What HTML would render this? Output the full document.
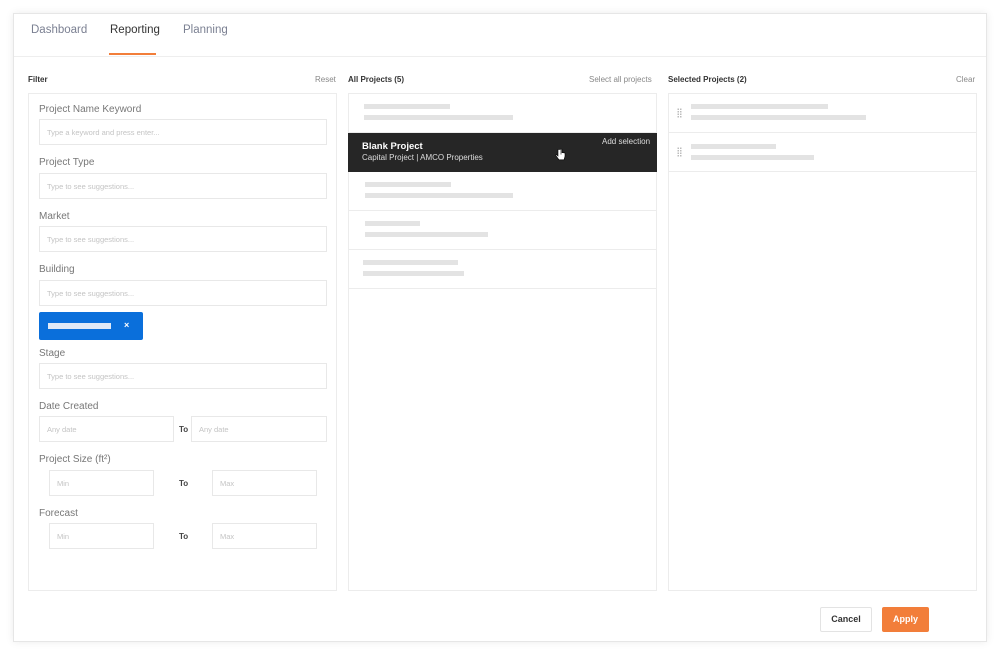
<!DOCTYPE html>
<html><head><meta charset="utf-8"><style>
*{box-sizing:border-box;margin:0;padding:0}
body{width:1000px;height:655px;background:#fff;font-family:"Liberation Sans",sans-serif;position:relative;overflow:hidden}
.a{position:absolute}
.card{left:13px;top:13px;width:974px;height:629px;border:1px solid #e6e6e6;box-shadow:0 0 8px rgba(0,0,0,.08);background:#fff}
.tab{top:24px;font-size:11.5px;color:#7b8092}
.h{font-size:8px;font-weight:bold;color:#333}
.lnk{font-size:8px;color:#888}
.box{border:1px solid #ececec;background:#fff}
.lbl{font-size:10px;color:#777}
.in{border:1px solid #e8e8e8;height:26px;font-size:7.5px;color:#c4c4c4;padding:8px 0 0 7px}
.to{font-size:8px;font-weight:bold;color:#444}
.bar{background:#e3e3e3;height:5px}
.row{border-bottom:1px solid #ececec;height:39px;left:0;width:100%}
.dots{width:5px;height:10px;background-image:radial-gradient(#bbb 0.7px,transparent 0.9px);background-size:2.5px 2.5px}
</style></head><body>
<div class="a card"></div>
<div class="a" style="left:14px;top:56px;width:972px;height:1px;background:#eee"></div>
<div class="a tab" style="left:31px">Dashboard</div>
<div class="a tab" style="left:110px;color:#333">Reporting</div>
<div class="a tab" style="left:183px">Planning</div>
<div class="a" style="left:109px;top:53px;width:47px;height:2px;background:#f27e3a"></div>

<div class="a h" style="left:28px;top:75px">Filter</div>
<div class="a lnk" style="left:315px;top:75px">Reset</div>
<div class="a h" style="left:348px;top:75px">All Projects (5)</div>
<div class="a lnk" style="left:589px;top:75px">Select all projects</div>
<div class="a h" style="left:668px;top:75px">Selected Projects (2)</div>
<div class="a lnk" style="left:956px;top:75px">Clear</div>

<div class="a box" style="left:28px;top:93px;width:309px;height:498px"></div>
<div class="a lbl" style="left:39px;top:104px">Project Name Keyword</div>
<div class="a in" style="left:39px;top:119px;width:288px">Type a keyword and press enter...</div>
<div class="a lbl" style="left:39px;top:157px">Project Type</div>
<div class="a in" style="left:39px;top:173px;width:288px">Type to see suggestions...</div>
<div class="a lbl" style="left:39px;top:211px">Market</div>
<div class="a in" style="left:39px;top:226px;width:288px">Type to see suggestions...</div>
<div class="a lbl" style="left:39px;top:264px">Building</div>
<div class="a in" style="left:39px;top:280px;width:288px">Type to see suggestions...</div>
<div class="a" style="left:39px;top:312px;width:104px;height:28px;background:#0a6fdb;border-radius:2px"></div>
<div class="a" style="left:48px;top:323px;width:63px;height:6px;background:#dfe9f7"></div>
<div class="a" style="left:124px;top:320px;font-size:9px;font-weight:bold;color:#fff">×</div>
<div class="a lbl" style="left:39px;top:348px">Stage</div>
<div class="a in" style="left:39px;top:363px;width:288px">Type to see suggestions...</div>
<div class="a lbl" style="left:39px;top:401px">Date Created</div>
<div class="a in" style="left:39px;top:416px;width:135px">Any date</div>
<div class="a to" style="left:179px;top:425px">To</div>
<div class="a in" style="left:191px;top:416px;width:136px">Any date</div>
<div class="a lbl" style="left:39px;top:454px">Project Size (ft²)</div>
<div class="a in" style="left:49px;top:470px;width:105px">Min</div>
<div class="a to" style="left:179px;top:479px">To</div>
<div class="a in" style="left:212px;top:470px;width:105px">Max</div>
<div class="a lbl" style="left:39px;top:508px">Forecast</div>
<div class="a in" style="left:49px;top:523px;width:105px">Min</div>
<div class="a to" style="left:179px;top:532px">To</div>
<div class="a in" style="left:212px;top:523px;width:105px">Max</div>

<div class="a box" style="left:348px;top:93px;width:309px;height:498px">
 <div class="a row" style="top:0"><div class="a bar" style="left:15px;top:10px;width:86px"></div><div class="a bar" style="left:15px;top:21px;width:149px"></div></div>
 <div class="a" style="left:-1px;top:39px;width:309px;height:39px;background:#262626">
  <div class="a" style="left:14px;top:8px;font-size:9.5px;font-weight:bold;color:#fff">Blank Project</div>
  <div class="a" style="left:14px;top:20px;font-size:8px;color:#ddd">Capital Project | AMCO Properties</div>
  <div class="a" style="left:254px;top:4px;font-size:8px;color:#ddd">Add selection</div>
  <svg class="a" style="left:207px;top:15px" width="11" height="13" viewBox="0 0 11 13"><path d="M3 1.5v6.5l-1-1c-.6-.6-1.6 0-1 .8l3 4h5l1-3.5v-3c0-.6-1-.6-1 0v-.3c0-.6-1-.6-1 0 0-.6-1-.6-1 0V1.5c0-.8-1-.8-1 0v5 -5c0-.8-1-.8-1 0z" fill="#fff" stroke="#000" stroke-width=".6"/></svg>
 </div>
 <div class="a row" style="top:78px"><div class="a bar" style="left:16px;top:10px;width:86px"></div><div class="a bar" style="left:16px;top:21px;width:148px"></div></div>
 <div class="a row" style="top:117px"><div class="a bar" style="left:16px;top:10px;width:55px"></div><div class="a bar" style="left:16px;top:21px;width:123px"></div></div>
 <div class="a row" style="top:156px"><div class="a bar" style="left:14px;top:10px;width:95px"></div><div class="a bar" style="left:14px;top:21px;width:101px"></div></div>
</div>

<div class="a box" style="left:668px;top:93px;width:309px;height:498px">
 <div class="a row" style="top:0"><div class="a dots" style="left:8px;top:14px"></div><div class="a bar" style="left:22px;top:10px;width:137px"></div><div class="a bar" style="left:22px;top:21px;width:175px"></div></div>
 <div class="a row" style="top:39px"><div class="a dots" style="left:8px;top:14px"></div><div class="a bar" style="left:22px;top:11px;width:85px"></div><div class="a bar" style="left:22px;top:22px;width:123px"></div></div>
</div>

<div class="a" style="left:820px;top:607px;width:52px;height:25px;border:1px solid #e3e3e3;border-radius:2px;font-size:9px;font-weight:bold;color:#333;text-align:center;line-height:23px">Cancel</div>
<div class="a" style="left:882px;top:607px;width:47px;height:25px;background:#f27e3a;border-radius:2px;font-size:9px;font-weight:bold;color:#fff;text-align:center;line-height:25px">Apply</div>
</body></html>
